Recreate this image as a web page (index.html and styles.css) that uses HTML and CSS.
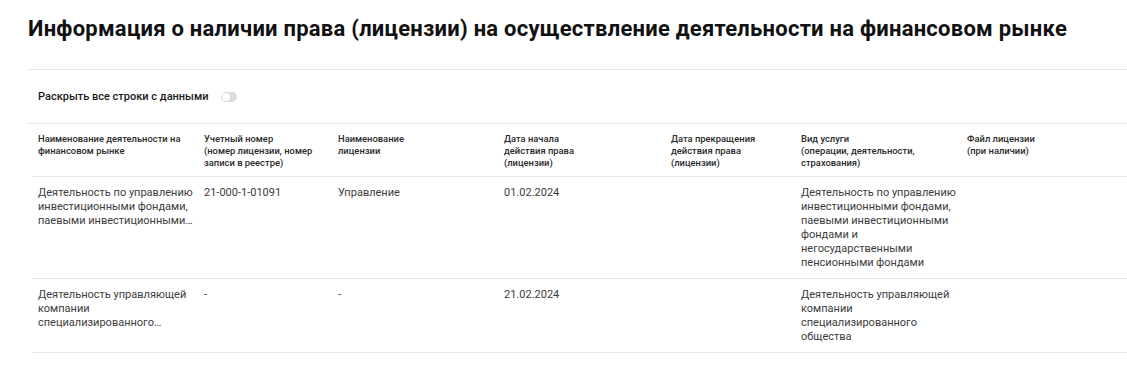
FILE: index.html
```html
<!DOCTYPE html>
<html lang="ru">
<head>
<meta charset="utf-8">
<link rel="stylesheet" href="styles.css">
</head>
<body>
<div class="page">
  <h1 class="title">Информация о наличии права (лицензии) на осуществление деятельности на финансовом рынке</h1>
  <div class="toolbar">
    <span class="toolbar-label">Раскрыть все строки с данными</span>
    <span class="toggle"><span class="toggle-knob"></span></span>
  </div>
  <div class="table">
    <div class="row head">
      <div class="cell">Наименование деятельности на финансовом рынке</div>
      <div class="cell">Учетный номер<br>(номер лицензии, номер записи в реестре)</div>
      <div class="cell">Наименование<br>лицензии</div>
      <div class="cell">Дата начала<br>действия права<br>(лицензии)</div>
      <div class="cell">Дата прекращения<br>действия права<br>(лицензии)</div>
      <div class="cell">Вид услуги<br>(операции, деятельности,<br>страхования)</div>
      <div class="cell">Файл лицензии<br>(при наличии)</div>
    </div>
    <div class="row body">
      <div class="cell"><span class="clamp">Деятельность по управлению инвестиционными фондами, паевыми инвестиционными фондами и негосударственными пенсионными фондами</span></div>
      <div class="cell">21-000-1-01091</div>
      <div class="cell">Управление</div>
      <div class="cell">01.02.2024</div>
      <div class="cell"></div>
      <div class="cell">Деятельность по управлению инвестиционными фондами, паевыми инвестиционными фондами и негосударственными пенсионными фондами</div>
      <div class="cell"></div>
    </div>
    <div class="row body">
      <div class="cell"><span class="clamp">Деятельность управляющей компании специализированного общества</span></div>
      <div class="cell">-</div>
      <div class="cell">-</div>
      <div class="cell">21.02.2024</div>
      <div class="cell"></div>
      <div class="cell">Деятельность управляющей компании специализированного общества</div>
      <div class="cell"></div>
    </div>
  </div>
</div>
</body>
</html>
```
FILE: styles.css
```css
html, body {
  margin: 0;
  padding: 0;
  background: #fff;
}
body {
  font-family: Roboto, "Noto Sans", sans-serif;
  color: #1a1a1a;
}
.page {
  padding: 16px 0 0 27px;
}
.title {
  margin: 0 0 0 1px;
  font-size: 22px;
  line-height: 26px;
  font-weight: 700;
  letter-spacing: 0.24px;
  color: #111;
  padding-bottom: 27px;
  border-bottom: 1px solid #e8e8e8;
}
.toolbar {
  display: flex;
  align-items: center;
  gap: 12px;
  padding: 20px 0 19px 11px;
  border-bottom: 1px solid #e8e8e8;
}
.toolbar-label {
  font-size: 11px;
  line-height: 14px;
  font-weight: 500;
  color: #1a1a1a;
}
.toggle {
  display: flex;
  align-items: center;
  width: 16px;
  height: 10px;
  border-radius: 5px;
  background: #dcdcdc;
  padding: 0 1px;
  box-sizing: border-box;
}
.toggle-knob {
  width: 8px;
  height: 8px;
  border-radius: 50%;
  background: #fff;
}
.table {
  margin-left: 5px;
}
.row {
  display: grid;
  grid-template-columns: 166px 134px 166px 167px 130px 166px 1fr;
  border-bottom: 1px solid #e8e8e8;
}
.cell {
  padding-left: 6px;
  padding-right: 0;
}
.head .cell {
  font-size: 9.4px;
  line-height: 12px;
  font-weight: 500;
  color: #2a2a2a;
  padding-top: 9px;
  padding-bottom: 7px;
}
.body .cell {
  font-size: 11px;
  line-height: 14px;
  color: #3c3c3c;
  padding-top: 9px;
  padding-bottom: 8px;
}
.clamp {
  display: -webkit-box;
  -webkit-line-clamp: 3;
  -webkit-box-orient: vertical;
  overflow: hidden;
}
```
